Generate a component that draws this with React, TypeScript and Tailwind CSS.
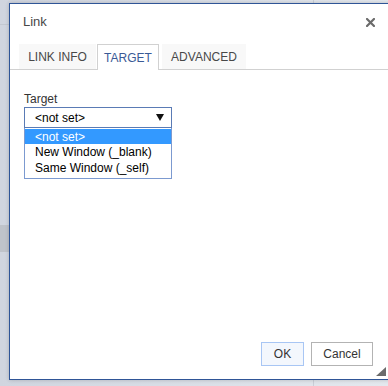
import React from 'react';

const Tab: React.FC<{ label: string; active?: boolean; width: string }> = ({ label, active, width }) => (
    <div
        className={
            active
                ? `${width} h-[26px] -mb-px flex items-center justify-center bg-white border border-b-0 border-[#d1d1d1] text-[#3a5a96]`
                : `${width} h-[25px] flex items-center justify-center bg-[#f8f8f8] text-[#484848]`
        }
    >
        {label}
    </div>
);

export default function App() {
    return (
        <div
            className="relative w-[388px] h-[386px] overflow-hidden bg-gradient-to-r from-[#d0d5df] to-[#e4e8ee]"
            style={{ fontFamily: '"Liberation Sans", Arial, sans-serif' }}
        >
            {/* page behind the dialog */}
            <div className="flex flex-col w-[9px]">
                <div className="h-[24px]" />
                <div className="h-px bg-[#c3c8d1]" />
                <div className="h-[200px]" />
                <div className="h-[27px] bg-[#bfc3ca]" />
            </div>
            <div className="absolute left-[313px] top-0 w-px h-[386px] bg-[#c9ced7]" />

            {/* Dialog */}
            <div className="absolute left-[9px] top-[3px] w-[400px] h-[377px] bg-white border border-[#2f5597] shadow-[0_0_4px_rgba(0,0,0,0.2)] flex flex-col">
                <div className="h-[40px] pt-[10px] pl-[13px]">
                    <span className="block text-[13px] leading-[16px] text-[#484848]">Link</span>
                </div>
                <div className="absolute left-[356px] top-[14px] w-[9px] h-[9px]">
                    <svg width="9" height="9" viewBox="0 0 9 9">
                        <path d="M1 1 L8 8 M8 1 L1 8" stroke="#6b6b6b" strokeWidth="2.2" strokeLinecap="square" />
                    </svg>
                </div>

                {/* Tabs */}
                <div className="flex items-end gap-px pl-[9px] border-b border-[#d1d1d1] text-[12px]">
                    <Tab label="LINK INFO" width="w-[77px]" />
                    <Tab label="TARGET" width="w-[62px]" active />
                    <div className="w-px" />
                    <Tab label="ADVANCED" width="w-[84px]" />
                </div>

                {/* Content */}
                <div className="pl-[14px] pt-[22px] text-[12px] text-[#333]">
                    <div className="leading-[14px] mb-[1px]">Target</div>
                    <div className="w-[148px] h-[21px] border border-[#5a7bb5] flex items-center justify-between pl-[10px] pr-[7px] text-black">
                        <span>&lt;not set&gt;</span>
                        <svg width="8" height="7" viewBox="0 0 8 7">
                            <path d="M0 0 H8 L4 7 Z" fill="#111" />
                        </svg>
                    </div>
                    <div className="w-[148px] border border-t-0 border-[#7c9ad0] pt-px pb-[2px] flex flex-col text-black">
                        <div className="h-[15px] flex items-center pl-[10px] bg-[#3399ff] text-white">&lt;not set&gt;</div>
                        <div className="h-[16px] flex items-center pl-[10px]">New Window (_blank)</div>
                        <div className="h-[16px] flex items-center pl-[10px]">Same Window (_self)</div>
                    </div>
                </div>

                {/* Footer buttons */}
                <div className="mt-auto mb-[13px] flex gap-[7px] pl-[251px] text-[12px]">
                    <div className="w-[43px] h-[24px] flex items-center justify-center bg-[#f3f7fd] border border-[#a8c6f4] text-[#333]">OK</div>
                    <div className="w-[62px] h-[24px] flex items-center justify-center bg-white border border-[#b3b3b3] text-[#333]">Cancel</div>
                </div>
                <div className="absolute left-[366px] top-[363px]">
                    <svg width="10" height="9" viewBox="0 0 10 9">
                        <path d="M10 0 V9 H0 Z" fill="#6b6b6b" />
                    </svg>
                </div>
            </div>
        </div>
    );
}
